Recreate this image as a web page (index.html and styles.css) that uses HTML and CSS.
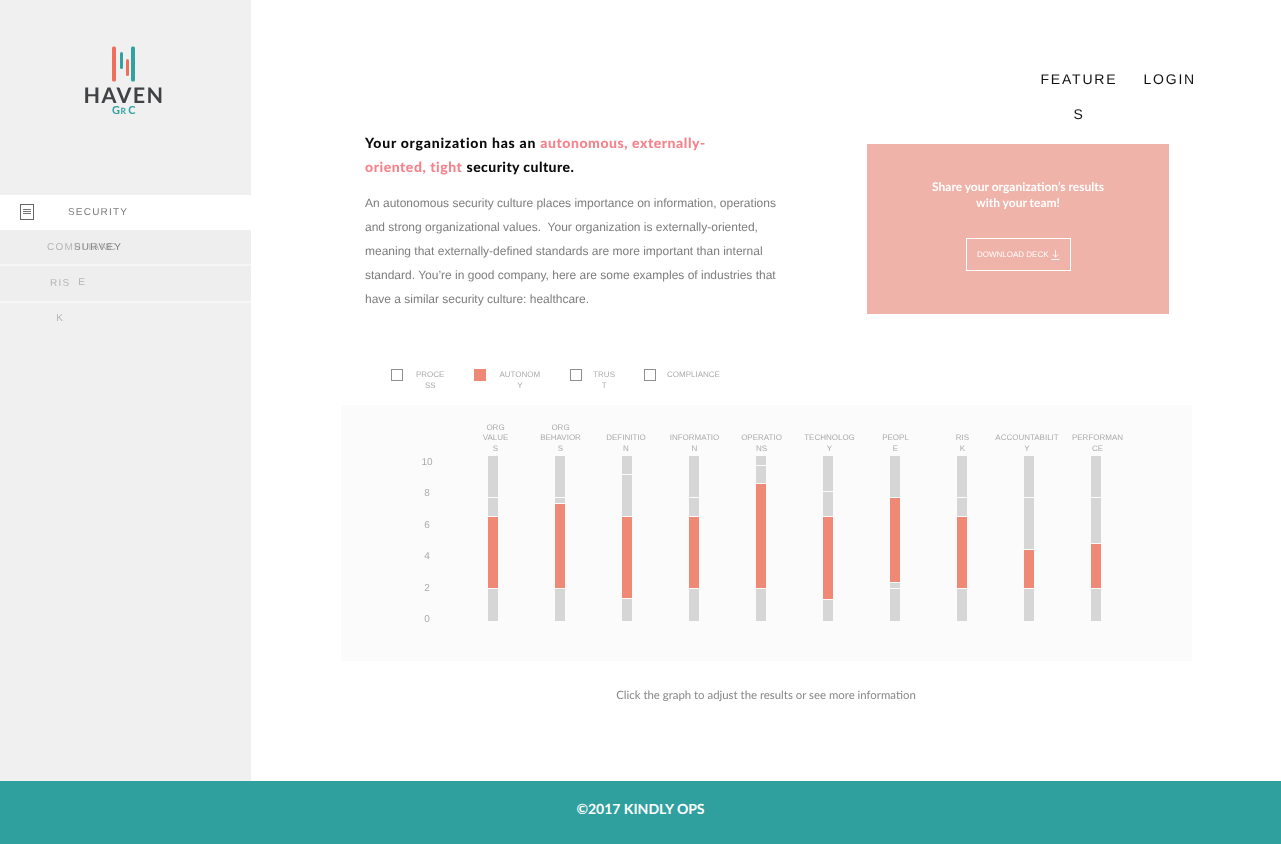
FILE: index.html
```html
<!DOCTYPE html>
<html lang="en">
<head>
<meta charset="utf-8">
<title>Haven GRC</title>
<link rel="stylesheet" href="styles.css">
</head>
<body>
<div class="shell">
  <aside class="sidebar">
    <div class="logo">
      <svg class="logo-mark" width="24" height="36" viewBox="0 0 24 36">
        <rect x="0" y="0.5" width="4" height="35" rx="1.5" fill="#ef6f5c"/>
        <rect x="8" y="6" width="3" height="17" rx="1.5" fill="#2fa3a0"/>
        <rect x="14" y="13" width="3" height="17" rx="1.5" fill="#ef6f5c"/>
        <rect x="19" y="0.5" width="4" height="35" rx="1.5" fill="#2fa3a0"/>
      </svg>
      <div class="logo-name">HAVEN</div>
      <div class="logo-sub">G<span class="logo-r">R</span> C</div>
    </div>
    <nav class="side-nav">
      <a class="side-item active">
        <svg class="side-icon" width="14" height="16" viewBox="0 0 14 16">
          <rect x="0.5" y="0.5" width="13" height="15" fill="none" stroke="#666"/>
          <path d="M3 5.5h8M3 7.5h8M3 9.5h8" stroke="#777" stroke-width="1" fill="none"/>
        </svg>
        <span class="side-label label-survey">SECURITY<br>SURVEY</span>
      </a>
      <a class="side-item">
        <span class="side-label label-compliance">COMPLIANC<br>E</span>
      </a>
      <a class="side-item">
        <span class="side-label label-risk">RIS<br>K</span>
      </a>
    </nav>
  </aside>
  <main class="main">
    <header class="top-nav">
      <a class="top-link">FEATURE<br>S</a>
      <a class="top-link">LOGIN</a>
    </header>
    <section class="intro">
      <div class="intro-text">
        <h1 class="headline">Your organization has an <em class="accent">autonomous, externally-<br>oriented, tight</em> <span class="tail">security culture.</span></h1>
        <p class="body-copy">An autonomous security culture places importance on information, operations and strong organizational values.&nbsp; Your organization is externally-oriented, meaning that externally-defined standards are more important than internal standard. You’re in good company, here are some examples of industries that have a similar security culture: healthcare.</p>
      </div>
      <div class="share-card">
        <p class="share-text">Share your organization’s results<br>with your team!</p>
        <a class="download-btn">DOWNLOAD DECK
          <svg class="download-icon" width="9" height="10" viewBox="0 0 9 10">
            <path d="M4.5 0v7M1.8 4.5l2.7 2.7 2.7-2.7M0.5 9.5h8" fill="none" stroke="#fff" stroke-width="0.9"/>
          </svg>
        </a>
      </div>
    </section>
    <div class="legend">
      <div class="legend-item"><span class="legend-box"></span><span class="legend-label">PROCE<br>SS</span></div>
      <div class="legend-item item-autonomy"><span class="legend-box filled"></span><span class="legend-label">AUTONOM<br>Y</span></div>
      <div class="legend-item item-trust"><span class="legend-box"></span><span class="legend-label">TRUS<br>T</span></div>
      <div class="legend-item item-compliance"><span class="legend-box"></span><span class="legend-label">COMPLIANCE</span></div>
    </div>
    <section class="chart">
      <div class="axis"><span>10</span><span>8</span><span>6</span><span>4</span><span>2</span><span>0</span></div>
      <div class="columns">
        <div class="col"><div class="col-label n1">ORG<br>VALUE<br>S</div><div class="bar"><i class="seg" style="height:41px"></i><i class="seg" style="height:18px"></i><i class="seg hot" style="height:71px"></i><i class="seg" style="height:32px"></i></div></div>
        <div class="col"><div class="col-label">ORG<br>BEHAVIOR<br>S</div><div class="bar"><i class="seg" style="height:41px"></i><i class="seg" style="height:5px"></i><i class="seg hot" style="height:84px"></i><i class="seg" style="height:32px"></i></div></div>
        <div class="col"><div class="col-label n3">DEFINITIO<br>N</div><div class="bar"><i class="seg" style="height:18px"></i><i class="seg" style="height:41px"></i><i class="seg hot" style="height:81px"></i><i class="seg" style="height:22px"></i></div></div>
        <div class="col"><div class="col-label">INFORMATIO<br>N</div><div class="bar"><i class="seg" style="height:41px"></i><i class="seg" style="height:18px"></i><i class="seg hot" style="height:71px"></i><i class="seg" style="height:32px"></i></div></div>
        <div class="col"><div class="col-label">OPERATIO<br>NS</div><div class="bar"><i class="seg" style="height:9px"></i><i class="seg" style="height:17px"></i><i class="seg hot" style="height:104px"></i><i class="seg" style="height:32px"></i></div></div>
        <div class="col"><div class="col-label n6">TECHNOLOG<br>Y</div><div class="bar"><i class="seg" style="height:35px"></i><i class="seg" style="height:24px"></i><i class="seg hot" style="height:82px"></i><i class="seg" style="height:21px"></i></div></div>
        <div class="col"><div class="col-label">PEOPL<br>E</div><div class="bar"><i class="seg" style="height:41px"></i><i class="seg hot" style="height:84px"></i><i class="seg" style="height:5px"></i><i class="seg" style="height:32px"></i></div></div>
        <div class="col"><div class="col-label">RIS<br>K</div><div class="bar"><i class="seg" style="height:41px"></i><i class="seg" style="height:18px"></i><i class="seg hot" style="height:71px"></i><i class="seg" style="height:32px"></i></div></div>
        <div class="col"><div class="col-label n9">ACCOUNTABILIT<br>Y</div><div class="bar"><i class="seg" style="height:41px"></i><i class="seg" style="height:51px"></i><i class="seg hot" style="height:38px"></i><i class="seg" style="height:32px"></i></div></div>
        <div class="col"><div class="col-label n10">PERFORMAN<br>CE</div><div class="bar"><i class="seg" style="height:41px"></i><i class="seg" style="height:45px"></i><i class="seg hot" style="height:44px"></i><i class="seg" style="height:32px"></i></div></div>
      </div>
    </section>
    <p class="caption">Click the graph to adjust the results or see more information</p>
  </main>
</div>
<footer class="footer">©2017 KINDLY OPS</footer>
</body>
</html>
```

FILE: styles.css
```css
* { box-sizing: border-box; }
html, body { margin: 0; padding: 0; }
body {
  width: 1281px;
  height: 844px;
  overflow: hidden;
  background: #fff;
  font-family: "Liberation Sans", Arial, sans-serif;
  text-rendering: geometricPrecision;
}
.shell { display: flex; height: 781px; will-change: transform; }

/* Sidebar */
.sidebar { width: 251px; flex: none; background: #f0f0f0; }
.logo {
  height: 195px;
  padding: 46px 3px 0 0;
  display: flex;
  flex-direction: column;
  align-items: center;
}
.logo-mark { display: block; margin-right: 1px; }
.logo-name {
  font-family: Lato, sans-serif;
  font-weight: 700;
  font-size: 21.5px;
  line-height: 20px;
  letter-spacing: 1.4px;
  color: #404245;
  margin-top: 3px;
}
.logo-sub {
  font-family: Lato, sans-serif;
  font-weight: 700;
  font-size: 11px;
  line-height: 12px;
  letter-spacing: 0.4px;
  color: #2fa3a0;
  word-spacing: -1px;
}
.logo-r { font-size: 8.5px; }

.side-nav { display: flex; flex-direction: column; }
.side-item {
  display: flex;
  height: 36px;
  background: #eeeeee;
  border-bottom: 2px solid #f6f6f6;
}
.side-item:last-child { height: 37px; }
.side-item.active { background: #fff; border-bottom: 0; height: 35px; }
.side-icon { display: block; flex: none; margin: 9px 0 0 20px; }
.side-label {
  position: relative;
  z-index: 1;
  display: block;
  font-size: 10px;
  line-height: 35px;
  letter-spacing: 1.2px;
  color: #b5b5b5;
  text-align: center;
}
.label-survey { color: #7c7c7c; margin-left: 34px; }
.label-compliance { margin-left: 47px; }
.label-risk { margin-left: 50px; }

/* Main */
.main { flex: 1; min-width: 0; padding-top: 62px; }
.top-nav {
  display: flex;
  justify-content: flex-end;
  gap: 26px;
  height: 69px;
  padding-right: 85px;
}
.top-link {
  font-size: 14px;
  line-height: 35px;
  letter-spacing: 1.8px;
  color: #111;
  text-align: center;
}
.intro { display: flex; padding-left: 114px; }
.intro-text { width: 420px; flex: none; }
.headline {
  margin: 0 0 12px;
  font-family: Lato, sans-serif;
  font-weight: 900;
  font-size: 14px;
  line-height: 24px;
  letter-spacing: 0.76px;
  color: #0a0a0a;
}
.accent { font-style: normal; letter-spacing: 0.55px; color: #f6828b; }
.tail { letter-spacing: 0.42px; }
.body-copy { margin: 0; font-size: 12px; line-height: 24px; color: #7d7d7d; }
.share-card {
  width: 302px;
  height: 170px;
  margin: 13px 0 0 82px;
  flex: none;
  background: #efb3a9;
  display: flex;
  flex-direction: column;
  align-items: center;
  padding-top: 35px;
}
.share-text {
  margin: 0;
  font-family: Lato, sans-serif;
  font-weight: 700;
  font-size: 12px;
  line-height: 16px;
  color: #fff;
  text-align: center;
}
.download-btn {
  display: flex;
  align-items: center;
  gap: 2px;
  width: 105px;
  height: 33px;
  margin: 27px 0 0 1px;
  padding-left: 10px;
  border: 1px solid #fff;
  font-size: 8px;
  color: #fff;
  white-space: nowrap;
}
.download-icon { display: block; flex: none; }

/* Legend */
.legend {
  display: flex;
  gap: 29px;
  height: 21px;
  margin: 55px 0 15px 140px;
}
.legend-item { display: flex; }
.item-autonomy, .item-trust { margin-left: 1px; }
.legend-box {
  width: 12px;
  height: 12px;
  flex: none;
  border: 1px solid #8f8f8f;
}
.legend-box.filled { background: #ef8875; border: 0; }
.legend-label {
  margin: 1px 0 0 13px;
  font-size: 8px;
  line-height: 10.5px;
  color: #ababab;
  text-align: center;
}
.item-trust .legend-label { margin-left: 11px; }
.item-compliance .legend-label { margin-left: 11px; }

/* Chart */
.chart {
  display: flex;
  width: 851px;
  height: 256px;
  margin-left: 90px;
  padding: 17px 0 0 80px;
  background: #fbfbfb;
}
.axis {
  width: 39px;
  flex: none;
  height: 169px;
  margin-top: 35px;
  display: flex;
  flex-direction: column;
  justify-content: space-between;
  align-items: flex-start;
  font-size: 10px;
  line-height: 12px;
  color: #ababab;
}
.axis span { width: 12px; text-align: center; }
.columns { display: grid; grid-template-columns: repeat(10, 67px); align-self: flex-start; }
.col { display: flex; flex-direction: column; }
.col-label {
  height: 34px;
  padding-bottom: 2px;
  display: flex;
  flex-direction: column;
  justify-content: flex-end;
  align-items: center;
  font-size: 8px;
  line-height: 10.5px;
  color: #ababab;
  text-align: center;
  white-space: nowrap;
}
.col-label.n1 { margin-left: 4px; }
.col-label.n6, .col-label.n10 { margin-left: 2px; }
.col-label.n3 { margin-right: 3px; }
.col-label.n9 { margin-right: 5px; }
.bar {
  width: 10px;
  margin-left: 28px;
  display: flex;
  flex-direction: column;
  gap: 1px;
}
.seg { display: block; background: #d6d6d6; }
.seg.hot { background: #ef8875; }

.caption {
  margin: 29px 0 0;
  font-family: Lato, sans-serif;
  font-weight: 400;
  font-size: 11.4px;
  line-height: 12px;
  color: #868686;
  text-align: center;
}

/* Footer */
.footer {
  height: 63px;
  background: #2fa09e;
  color: #fff;
  font-family: Lato, sans-serif;
  font-weight: 700;
  font-size: 14px;
  line-height: 56px;
  text-align: center;
}
```
